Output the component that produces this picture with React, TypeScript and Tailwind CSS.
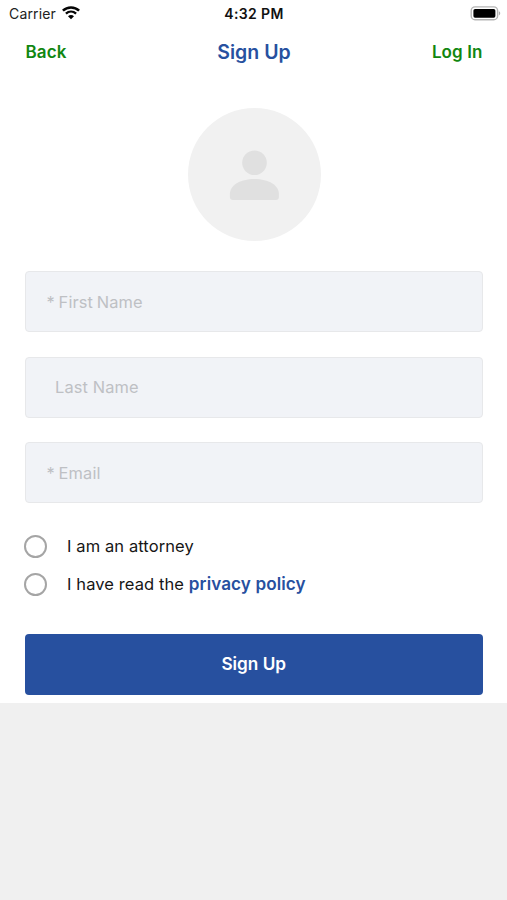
import type { ReactNode } from "react";

function StatusBar() {
  return (
    <div className="grid h-7 grid-cols-3 items-center pl-[9px] pr-[6px] leading-none">
      <div className="flex items-center gap-[6px]">
        <span className="text-[14px] tracking-[0.15px] text-[#222]">Carrier</span>
        <svg width="18" height="14" viewBox="0 0 18 14" fill="none" stroke="#050505" className="-mt-[2px]">
          <path d="M0.9 4.7C5.4 0.3 12.6 0.3 17.1 4.7" strokeWidth="2.5" />
          <path d="M3.9 7.7C6.9 4.9 11.1 4.9 14.1 7.7" strokeWidth="2.3" />
          <path d="M9 13.3L6 10.2C7.7 8.6 10.3 8.6 12 10.2Z" fill="#050505" stroke="none" />
        </svg>
      </div>
      <span className="pr-[2px] text-center text-[14px] font-semibold tracking-[0.35px] whitespace-nowrap text-[#111]">4:32 PM</span>
      <svg className="-mt-[2px] justify-self-end" width="31" height="15" viewBox="0 0 31 15">
        <rect x="1.2" y="0.9" width="26.4" height="12.8" rx="3.8" fill="#fff" stroke="#b5b5b5" strokeWidth="1.4" />
        <rect x="3.4" y="3" width="22" height="8.7" rx="1.7" fill="#000" />
        <path d="M28.9 5.2C30.7 5.9 30.7 8.7 28.9 9.4Z" fill="#b0b0b0" />
      </svg>
    </div>
  );
}

function NavBar() {
  return (
    <header className="grid h-12 grid-cols-3 items-center pt-[2px] pr-[24.5px] pl-[25.5px] text-[17px] font-semibold text-[#118711]">
      <button className="justify-self-start tracking-[0.1px]">Back</button>
      <h1 className="text-center text-[19.5px] text-[#27509f]">Sign Up</h1>
      <button className="justify-self-end tracking-[0.1px]">Log In</button>
    </header>
  );
}

function Field({ label, indent = false }: { label: string; indent?: boolean }) {
  return (
    <input
      aria-label={label}
      placeholder={label}
      className={`block h-[61px] w-full rounded-[4px] border border-[#e7e8ea] bg-[#f1f3f7] text-[16.4px] tracking-[0.13px] outline-none placeholder:text-[#bec0c4] ${indent ? "pl-[29px]" : "pl-[20.5px] [word-spacing:-1px]"}`}
    />
  );
}

function Option({ children }: { children: ReactNode }) {
  return (
    <label className="flex h-[38px] items-center gap-5 text-[16.5px] tracking-[0.1px] text-[#161616]">
      <span className="size-[23px] rounded-full border-2 border-[#a5a5a5]" />
      <span className="whitespace-nowrap">{children}</span>
    </label>
  );
}

export default function App() {
  return (
    <div className="min-h-screen w-full bg-[#f0f0f0] font-['Inter','Liberation_Sans',sans-serif]">
      <main className="h-[703px] bg-white">
        <StatusBar />
        <NavBar />
        <div className="flex justify-center pt-8 pl-px">
          <div className="flex size-[133px] items-center justify-center rounded-full bg-[#f1f1f1]">
            <svg width="50" height="50" viewBox="0 0 50 50" fill="#e0e0e0">
              <circle cx="25.5" cy="12.7" r="12.3" />
              <path d="M0.9 47V44C0.9 35.5 10.9 29 25.4 29S49.9 35.5 49.9 44V47Q49.9 50 46.9 50H3.9Q0.9 50 0.9 47Z" />
            </svg>
          </div>
        </div>
        <form className="pt-[30px] pr-[24.5px] pl-[25px]">
          <div className="flex flex-col gap-[24.5px]">
            <Field label="* First Name" />
            <Field label="Last Name" indent />
            <Field label="* Email" />
          </div>
          <div className="-ml-px mt-6">
            <Option>I am an attorney</Option>
            <Option>
              I have read the <a className="text-[17.1px] font-semibold text-[#27509f]">privacy policy</a>
            </Option>
          </div>
          <button type="button" className="mt-[31px] block h-[61px] w-full rounded-[4px] bg-[#27509f] pb-px text-[17.2px] font-semibold text-white">
            Sign Up
          </button>
        </form>
      </main>
    </div>
  );
}
